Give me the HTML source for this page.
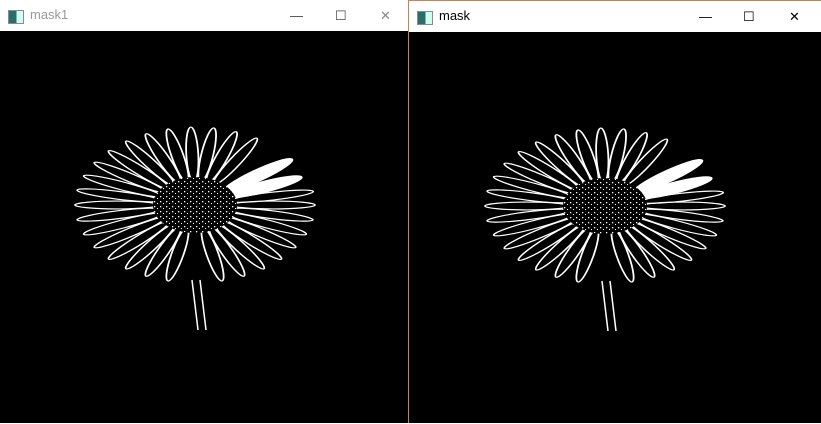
<!DOCTYPE html>
<html><head><meta charset="utf-8"><style>
body{margin:0;width:821px;height:423px;overflow:hidden;background:#fff;position:relative;font-family:"Segoe UI","Liberation Sans","Noto Sans CJK SC",sans-serif}
.win{position:absolute;top:0;height:423px;background:#000}
.tb{position:absolute;left:0;right:0;top:0;height:31px;background:#fff}
.ic{position:absolute;left:8px;top:10px;width:14px;height:12px;border:1px solid #889;background:linear-gradient(90deg,#2c6d6a 0 55%,#cfe 55%)}
.t{position:absolute;left:30px;top:7px;font-size:13px}
.ctl{position:absolute;top:8px;font-size:13px;color:#444;font-weight:300}
</style></head><body>
<svg width="0" height="0" style="position:absolute"><defs>
<pattern id="dots" width="6" height="5" patternUnits="userSpaceOnUse"><rect width="6" height="5" fill="#000"/><rect x="1" y="1" width="1.3" height="1.3" fill="#fff"/><rect x="4" y="3" width="1" height="1" fill="#fff"/></pattern>
<g id="fl">
<line x1="-3" y1="75" x2="3" y2="125" stroke="#fff" stroke-width="1.5"/>
<line x1="5" y1="75" x2="11" y2="125" stroke="#fff" stroke-width="1.5"/>
<g transform="scale(1,0.65)" fill="none" stroke="#fff" stroke-width="1.8">
<g id="p"><ellipse cx="78" cy="0" rx="42" ry="6"/></g>
<use href="#p" transform="rotate(11)"/><use href="#p" transform="rotate(22)"/><use href="#p" transform="rotate(33)"/><use href="#p" transform="rotate(44)"/><use href="#p" transform="rotate(55)"/><use href="#p" transform="rotate(66)"/><use href="#p" transform="rotate(77)"/><use href="#p" transform="rotate(103)"/><use href="#p" transform="rotate(114)"/><use href="#p" transform="rotate(125)"/><use href="#p" transform="rotate(136)"/><use href="#p" transform="rotate(147)"/><use href="#p" transform="rotate(158)"/><use href="#p" transform="rotate(169)"/><use href="#p" transform="rotate(180)"/><use href="#p" transform="rotate(191)"/><use href="#p" transform="rotate(202)"/><use href="#p" transform="rotate(213)"/><use href="#p" transform="rotate(224)"/><use href="#p" transform="rotate(235)"/><use href="#p" transform="rotate(246)"/><use href="#p" transform="rotate(257)"/><use href="#p" transform="rotate(268)"/><use href="#p" transform="rotate(279)"/><use href="#p" transform="rotate(290)"/><use href="#p" transform="rotate(301)"/><use href="#p" transform="rotate(350)"/>
<ellipse cx="75" cy="0" rx="40" ry="8" fill="#fff" transform="rotate(-22)"/>
<ellipse cx="78" cy="0" rx="42" ry="8" fill="#fff" transform="rotate(-36)"/>
</g>
<ellipse cx="0" cy="0" rx="42" ry="28" fill="url(#dots)"/>
</g></defs></svg>
<div class="win" style="left:0;width:408px">
<div class="tb"><div class="ic"></div><div class="t" style="color:#999">mask1</div>
<div class="ctl" style="left:290px">—</div><div class="ctl" style="left:335px">☐</div><div class="ctl" style="left:380px;color:#888">✕</div></div>
<svg style="position:absolute;top:31px;left:0" width="408" height="392"><use href="#fl" transform="translate(195,174)"/></svg>
</div>
<div class="win" style="left:408px;width:413px;border-left:1px solid #d08050;border-top:1px solid #d08050;box-sizing:border-box">
<div class="tb"><div class="ic"></div><div class="t" style="color:#000">mask</div>
<div class="ctl" style="left:290px;color:#000">—</div><div class="ctl" style="left:334px;color:#000">☐</div><div class="ctl" style="left:380px;color:#000">✕</div></div>
<svg style="position:absolute;top:31px;left:0" width="413" height="392"><use href="#fl" transform="translate(196,174)"/></svg>
</div>
</body></html>
